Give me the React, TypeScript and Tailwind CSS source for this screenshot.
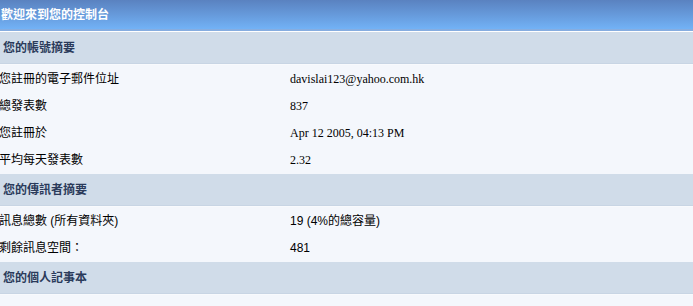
import { FC } from "react";

type Row = { label: string; value: string; serif?: boolean };

const sections: { title: string; rows: Row[] }[] = [
    {
        title: "您的帳號摘要",
        rows: [
            { label: "您註冊的電子郵件位址", value: "davislai123@yahoo.com.hk", serif: true },
            { label: "總發表數", value: "837", serif: true },
            { label: "您註冊於", value: "Apr 12 2005, 04:13 PM", serif: true },
            { label: "平均每天發表數", value: "2.32", serif: true },
        ],
    },
    {
        title: "您的傳訊者摘要",
        rows: [
            { label: "訊息總數 (所有資料夾)", value: "19 (4%的總容量)" },
            { label: "剩餘訊息空間：", value: "481" },
        ],
    },
    {
        title: "您的個人記事本",
        rows: [],
    },
];

const cjk = "font-['Liberation_Sans','Noto_Sans_CJK_TC',sans-serif]";
const serif = "font-['Liberation_Serif','Noto_Sans_CJK_TC',serif]";

const App: FC = () => {
    return (
        <div className={`w-[693px] h-[306px] overflow-hidden bg-[#f4f7fc] text-[12px] text-black ${cjk}`}>
            <div className="h-[29px] flex items-center pl-[1px] bg-gradient-to-b from-[#5a82c0] to-[#72b2f6] text-white font-bold text-[12px]">
                歡迎來到您的控制台
            </div>
            <div className="h-[2px] bg-[#86ade0]" />
            <div className="h-[1px] bg-white" />
            {sections.map((s) => (
                <div key={s.title}>
                    <div className="h-[32px] flex items-center pl-[3px] bg-[#d0dce9] border-b border-[#c8d5e4] font-bold text-[#2b3b5b]">
                        {s.title}
                    </div>
                    <div className="border-t border-[#f8fafd] pb-[1px]">
                        {s.rows.map((r) => (
                            <div key={r.label} className="h-[27px] flex items-center">
                                <div className="w-[291px] shrink-0 -ml-[1px]">{r.label}</div>
                                <div className={r.serif ? serif : ""}>{r.value}</div>
                            </div>
                        ))}
                    </div>
                </div>
            ))}
        </div>
    );
};

export default App;
